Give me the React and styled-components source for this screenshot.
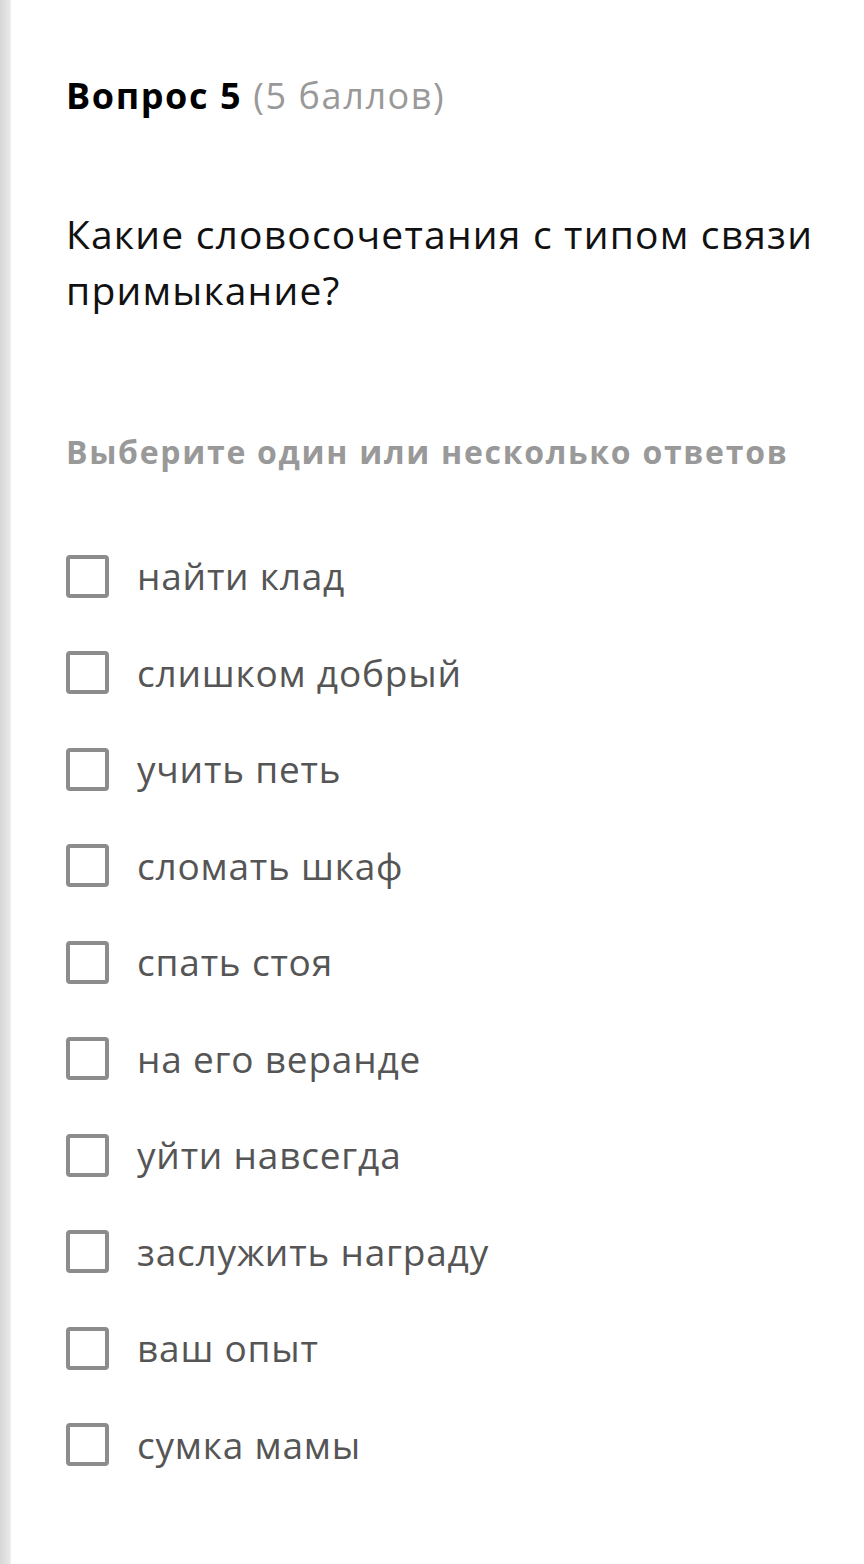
import React from 'react'
import styled, { createGlobalStyle } from 'styled-components';

const GlobalStyle = createGlobalStyle`
  html, body {
    margin: 0;
    padding: 0;
    background: #ffffff;
    font-family: 'Open Sans', 'Noto Sans', sans-serif;
  }
`;

const options = [
  'найти клад',
  'слишком добрый',
  'учить петь',
  'сломать шкаф',
  'спать стоя',
  'на его веранде',
  'уйти навсегда',
  'заслужить награду',
  'ваш опыт',
  'сумка мамы',
];

function App() {
  return (
    <>
      <GlobalStyle />
      <Page>
        <Edge />
        <Card>
          <Title>
            <strong>Вопрос 5</strong> <Points>(5 баллов)</Points>
          </Title>
          <Question>Какие словосочетания с типом связи примыкание?</Question>
          <Hint>Выберите один или несколько ответов</Hint>
          <Options>
            {options.map(text => (
              <Option key={text}>
                <Box type="checkbox" />
                <span>{text}</span>
              </Option>
            ))}
          </Options>
        </Card>
      </Page>
    </>
  )
}

export default App

const Page = styled.div`
  display: flex;
  min-height: 1564px;
`;

const Edge = styled.div`
  width: 11px;
  flex-shrink: 0;
  background: linear-gradient(to right, #d6d6d6, #e6e6e6 80%, #f2f2f2);
`;

const Card = styled.div`
  flex: 1;
  padding: 70px 30px 0 55px;
  background: #ffffff;
`;

const Title = styled.div`
  font-size: 36px;
  line-height: 52px;
  letter-spacing: 1.6px;
  color: #000;
  strong {
    font-weight: 700;
  }
`;

const Points = styled.span`
  color: #999999;
  font-weight: 400;
  letter-spacing: 1.6px;
`;

const Question = styled.div`
  margin-top: 84px;
  font-size: 39px;
  line-height: 56px;
  letter-spacing: 1.2px;
  color: #111;
`;

const Hint = styled.div`
  margin-top: 112px;
  font-size: 32px;
  font-weight: 700;
  line-height: 44px;
  letter-spacing: 1.7px;
  color: #999999;
`;

const Options = styled.div`
  margin-top: 80px;
  display: flex;
  flex-direction: column;
  gap: 52.5px;
`;

const Option = styled.label`
  display: flex;
  align-items: center;
  gap: 28px;
  font-size: 37px;
  line-height: 44px;
  letter-spacing: 0.8px;
  color: #555555;
`;

const Box = styled.input`
  appearance: none;
  margin: 0;
  width: 43px;
  height: 43px;
  box-sizing: border-box;
  border: 4px solid #8c8c8c;
  border-radius: 4px;
  background: #fff;
  flex-shrink: 0;
`;
